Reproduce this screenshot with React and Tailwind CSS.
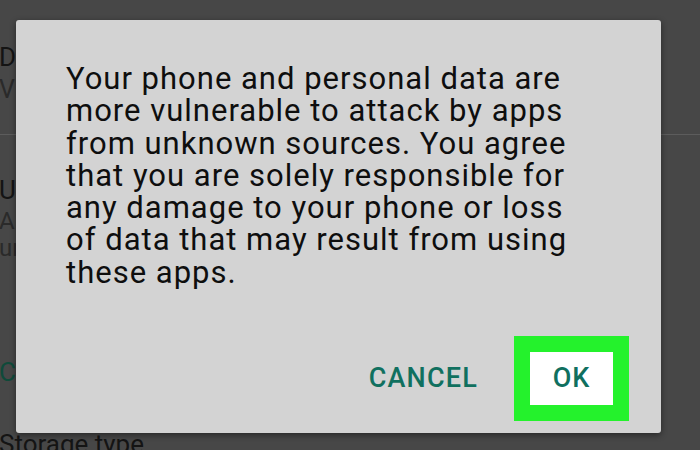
import React from "react";

const font = { fontFamily: "Roboto, 'Noto Sans', sans-serif" };

const lines = [
  "Your phone and personal data are",
  "more vulnerable to attack by apps",
  "from unknown sources. You agree",
  "that you are solely responsible for",
  "any damage to your phone or loss",
  "of data that may result from using",
  "these apps.",
];

export default function App() {
  return (
    <div className="relative w-[700px] h-[450px] overflow-hidden bg-[#474747]" style={font}>
      {/* settings list behind the dialog */}
      <div className="flex flex-col -ml-[1px]">
        <div className="pt-[40px] pb-[28px] border-b border-[#5c5c5c]">
          <div className="text-[26px] leading-[34px] text-[#141414]">Device administrators</div>
          <div className="text-[25px] leading-[32px] text-[#2a2a2a]">View or deactivate device administrators</div>
        </div>
        <div className="pt-[38px]">
          <div className="text-[26px] leading-[34px] text-[#141414]">Unknown sources</div>
          <div className="text-[24px] leading-[28px] text-[#2a2a2a]">Allow installation of apps from</div>
          <div className="text-[24px] leading-[26px] text-[#2a2a2a]">unknown sources</div>
        </div>
        <div className="pt-[94px] text-[26px] leading-[34px] text-[#0f4a3a]">CREDENTIAL STORAGE</div>
        <div className="pt-[38px] text-[26px] leading-[34px] text-[#141414]">Storage type</div>
      </div>

      {/* dialog */}
      <div className="absolute left-[16px] top-[20px] w-[645px] h-[413px] rounded-[3px] bg-[#d3d3d3] shadow-[0_2px_6px_rgba(0,0,0,0.45)] flex flex-col">
        <p className="pl-[50px] pt-[43px] text-[31px] leading-[32.3px] tracking-[1px] text-[#0e0e0e] whitespace-nowrap">
          {lines.map((l, i) => (
            <span key={i} className="block">{l}</span>
          ))}
        </p>
        <div className="mt-auto flex items-center justify-end gap-[36px] pr-[32px] pb-[12px]">
          <span className="text-[27px] font-medium tracking-[1.2px] text-[#10705f]">CANCEL</span>
          <div className="w-[115px] h-[85px] border-[16px] border-[#24f22c] bg-white flex items-center justify-center">
            <span className="text-[27px] font-medium tracking-[1px] text-[#10705f]">OK</span>
          </div>
        </div>
      </div>
    </div>
  );
}
